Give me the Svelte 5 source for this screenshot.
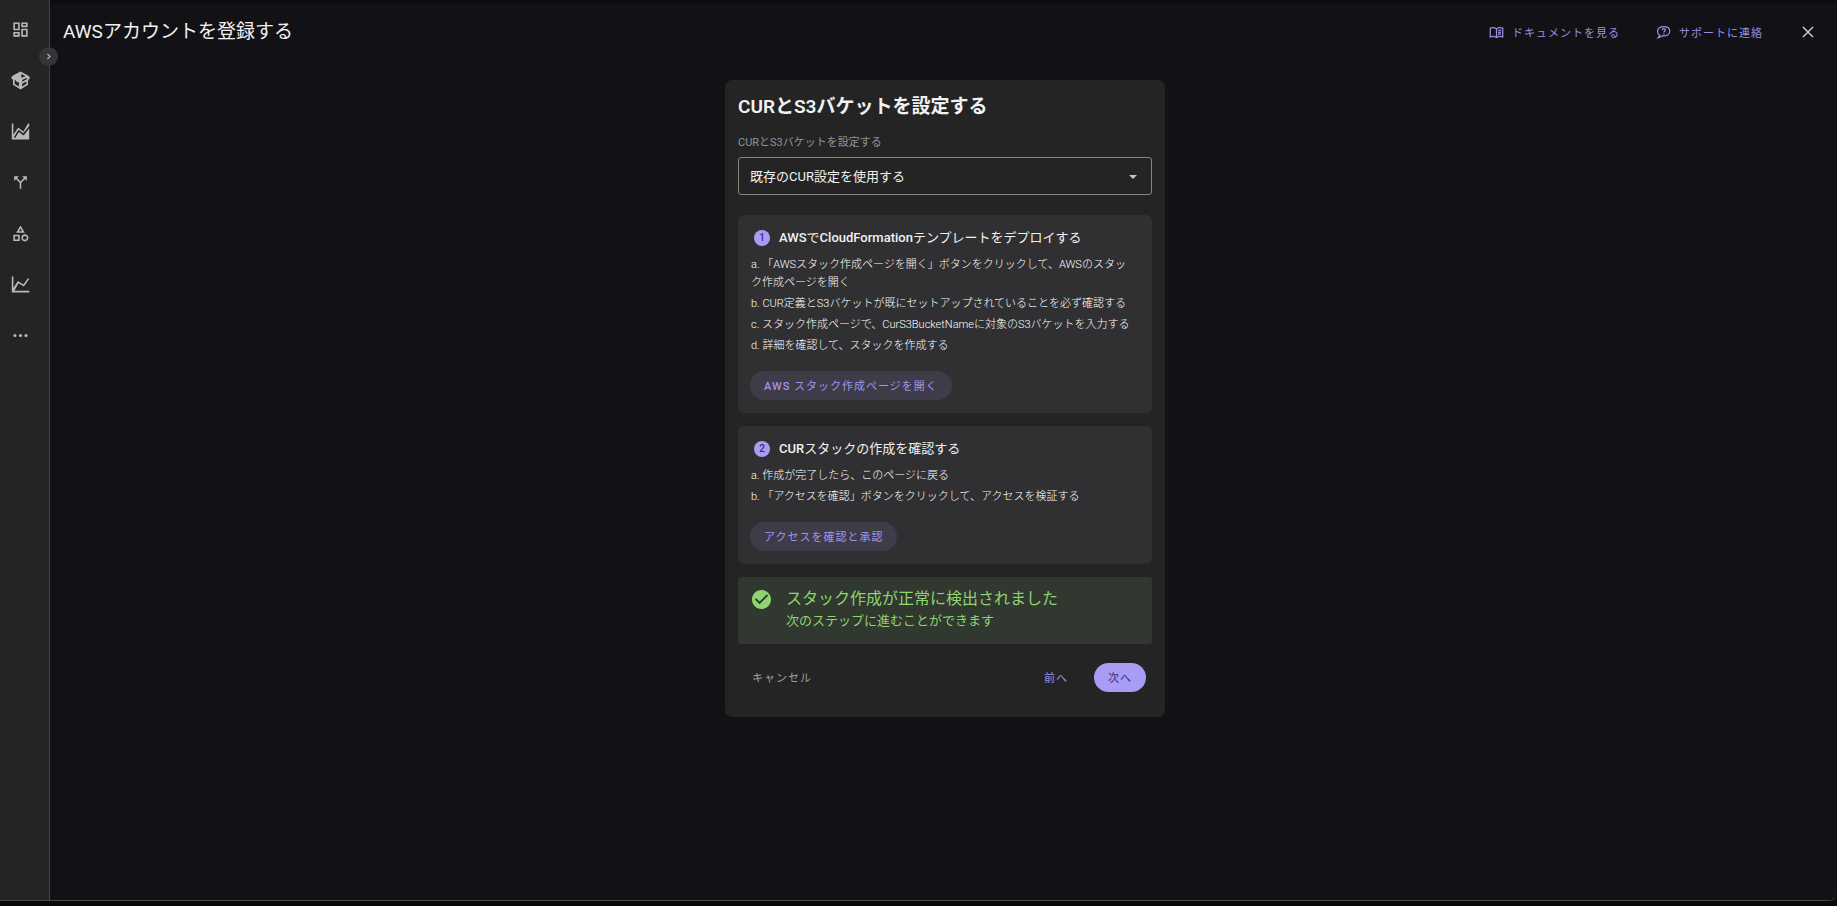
<script lang="ts">
	const navItems = [
		{
			label: 'ダッシュボード',
			path: 'M19 5v2h-4V5h4M9 5v6H5V5h4m10 8v6h-4v-6h4M9 17v2H5v-2h4M21 3h-8v6h8V3zM11 3H3v10h8V3zm10 8h-8v10h8V11zm-10 4H3v6h8v-6z'
		},
		{
			label: 'リソース',
			path: 'M12 .5 21 5.500l2.500 2.200v2.300L21.500 11v6.500L12 23.500 2.500 17.500V11L.5 9.500V7.500L3 5.500 12 .5zM4.700 10.800v5.500l5.300 3.300v-5.400L7.500 14l-2.800-3.200zM13 3.700v4.800l5.500-2L13 3.700zM14 11.500v2l6-3v-2l-6 3zm0 4.500v3.600l5.500-3.400v-3L14 16z'
		},
		{
			label: 'コスト',
			path: 'M1 2h2v14L9 7l6.500 5L21.500 2H23v20H1V2zM5.500 20 10 12.500l6 4.500L23 8V5l-7.500 9.300L9.500 9.800 3.500 19.500z'
		},
		{
			label: '配分',
			path: 'M14 4l2.290 2.290-4.290 4.300-4.290-4.300L10 4H4v6l2.290-2.290L11 12.410V20h2v-7.590l4.710-4.700L20 10V4z'
		},
		{
			label: 'カテゴリ',
			path: 'M12 2l-5.500 9h11L12 2zm0 3.840L13.930 9h-3.870L12 5.840zM17.500 13c-2.490 0-4.500 2.010-4.500 4.500s2.010 4.500 4.500 4.500 4.500-2.010 4.500-4.500-2.010-4.500-4.500-4.500zm0 7a2.500 2.500 0 0 1 0-5 2.500 2.500 0 0 1 0 5zM3 21.500h8v-8H3v8zm2-6h4v4H5v-4z'
		},
		{
			label: 'レポート',
			path: 'M1 2h2v14.500L8.700 7.500l7 4.500L21.200 4l1.700 1.100-6.600 9.500L9.500 10.300 4.300 20H23v2H1V2z'
		},
		{
			label: 'その他',
			path: 'M5 10a2 2 0 1 0 0 4 2 2 0 0 0 0-4zm7 0a2 2 0 1 0 0 4 2 2 0 0 0 0-4zm7 0a2 2 0 1 0 0 4 2 2 0 0 0 0-4z'
		}
	];

	const steps = [
		{
			title: 'AWSでCloudFormationテンプレートをデプロイする',
			items: [
				'a. 「AWSスタック作成ページを開く」ボタンをクリックして、AWSのスタック作成ページを開く',
				'b. CUR定義とS3バケットが既にセットアップされていることを必ず確認する',
				'c. スタック作成ページで、CurS3BucketNameに対象のS3バケットを入力する',
				'd. 詳細を確認して、スタックを作成する'
			],
			action: 'AWS スタック作成ページを開く'
		},
		{
			title: 'CURスタックの作成を確認する',
			items: [
				'a. 作成が完了したら、このページに戻る',
				'b. 「アクセスを確認」ボタンをクリックして、アクセスを検証する'
			],
			action: 'アクセスを確認と承認'
		}
	];

	let setup = $state('existing');

	// latin runs are medium, japanese stays regular
	function splitRuns(text: string) {
		return text.split(/([A-Za-z0-9]+)/).filter(Boolean);
	}
</script>

{#snippet mixed(text: string)}
	{#each splitRuns(text) as run}{#if /^[A-Za-z0-9]/.test(run)}<span class="latin">{run}</span
			>{:else}{run}{/if}{/each}
{/snippet}

<div class="app">
	<aside class="sidebar">
		<nav>
			{#each navItems as item}
				<a href="/" aria-label={item.label}>
					<svg viewBox="0 0 24 24"><path fill-rule="evenodd" d={item.path} /></svg>
				</a>
			{/each}
		</nav>
		<button class="toggle" aria-label="メニューを開く">
			<svg viewBox="0 0 24 24"><path d="M9 5l7 7-7 7" /></svg>
		</button>
	</aside>

	<div class="page">
		<header>
			<h1>AWSアカウントを登録する</h1>
			<div class="header-actions">
				<a href="/docs" class="header-link">
					<svg viewBox="0 0 24 24">
						<path
							d="M12 6C9.500 4.300 5.500 4 2 5v14c3.500-1 7.500-.7 10 1 2.500-1.700 6.500-2 10-1V5c-3.500-1-7.500-.7-10 1zv14"
						/>
						<path d="M14.500 9.200q2.500-1 5-.8M14.500 12.200q2.500-1 5-.8M14.500 15.200q2.500-1 5-.8" />
					</svg>
					ドキュメントを見る
				</a>
				<a href="/support" class="header-link">
					<svg viewBox="0 0 24 24">
						<path
							d="M6 16.500C3.500 15.500 2.500 13 2.500 10.500 2.500 5.500 6.500 2.500 12.500 2.500S22 5.500 22 10 18 17.500 12.500 17.500H10L3.500 20.500 6 16.500z"
						/>
						<path d="M10 8c0-3 5-3 5 0 0 2-2.500 2-2.500 4M12.500 13.500V15" />
					</svg>
					サポートに連絡
				</a>
				<button class="close" aria-label="閉じる">
					<svg viewBox="0 0 12 12"><path d="M1 1l10 10M11 1L1 11" /></svg>
				</button>
			</div>
		</header>

		<main>
			<section class="card">
				<h2>CURとS3バケットを設定する</h2>
				<label for="setup">CURとS3バケットを設定する</label>
				<div class="select">
					<select id="setup" bind:value={setup}>
						<option value="existing">既存のCUR設定を使用する</option>
					</select>
					<svg viewBox="0 0 8 4"><path d="M0 0h8L4 4z" /></svg>
				</div>

				{#each steps as step, i}
					<div class="step">
						<h3>
							<span class="number">{i + 1}</span>
							<span>{@render mixed(step.title)}</span>
						</h3>
						<ul>
							{#each step.items as item}
								<li>{item}</li>
							{/each}
						</ul>
						<button class="btn tonal">{@render mixed(step.action)}</button>
					</div>
				{/each}

				<div class="success" role="status">
					<svg viewBox="2 2 20 20">
						<path
							d="M12 2C6.480 2 2 6.480 2 12s4.480 10 10 10 10-4.480 10-10S17.520 2 12 2zm-2 15l-5-5 1.410-1.410L10 14.170l7.590-7.590L19 8l-9 9z"
						/>
					</svg>
					<div>
						<p class="success-title">スタック作成が正常に検出されました</p>
						<p class="success-text">次のステップに進むことができます</p>
					</div>
				</div>

				<div class="footer">
					<button class="btn cancel">キャンセル</button>
					<button class="btn">前へ</button>
					<button class="btn primary">次へ</button>
				</div>
			</section>
		</main>
	</div>
</div>

<style>
	:global(body) {
		background: #060a08;
	}
	.app {
		display: flex;
		box-sizing: border-box;
		height: calc(100vh - 5px);
		overflow: hidden;
		border-bottom: 1px solid #48484b;
		border-bottom-right-radius: 8px;
		background: #121116;
		color: #f1f1f1;
		font-family: Roboto, 'Noto Sans CJK JP', sans-serif;
	}
	svg {
		display: block;
		flex: none;
		fill: currentColor;
	}
	button {
		font: inherit;
		border: 0;
		background: none;
		cursor: pointer;
	}
	.sidebar {
		position: relative;
		flex: none;
		width: 49px;
		border-right: 1px solid #434346;
		background: #242425;
	}
	nav {
		display: flex;
		flex-direction: column;
		gap: 32px;
		padding: 20px 11px;
	}
	nav a {
		color: #b9b9ba;
	}
	nav svg {
		width: 19px;
		height: 19px;
	}
	.toggle {
		position: absolute;
		top: 47px;
		right: -9px;
		display: grid;
		place-items: center;
		width: 19px;
		height: 19px;
		padding: 0;
		border-radius: 50%;
		background: #353439;
		color: #b9b6c4;
	}
	.toggle svg {
		width: 9px;
		height: 9px;
		fill: none;
		stroke: currentColor;
		stroke-width: 3;
	}
	.page {
		flex: 1;
		min-width: 0;
		background: linear-gradient(#0a0a0d, #121116 6px);
	}
	header {
		display: flex;
		align-items: flex-start;
		justify-content: space-between;
		height: 46px;
		padding: 18px 23px 0 13px;
	}
	h1 {
		margin: 0;
		font-size: 19px;
		font-weight: 400;
		line-height: 28px;
	}
	.header-actions {
		display: flex;
		align-items: center;
		gap: 36px;
		height: 28px;
	}
	.header-link {
		display: flex;
		align-items: center;
		gap: 8px;
		color: #9a8fe0;
		font-size: 11px;
		letter-spacing: 1px;
		text-decoration: none;
	}
	.header-link svg {
		width: 15px;
		height: 15px;
		fill: none;
		stroke: currentColor;
		stroke-width: 2;
	}
	.close {
		margin-left: 3px;
		padding: 0;
		color: #c9c7d0;
	}
	.close svg {
		width: 12px;
		height: 12px;
		stroke: currentColor;
		stroke-width: 1.500;
	}
	main {
		display: flex;
		justify-content: center;
		padding: 16px 9px 16px 12px;
	}
	.card {
		box-sizing: border-box;
		width: 440px;
		padding: 14px 13px 25px;
		border-radius: 7px;
		background: #242425;
	}
	h2 {
		margin: 0;
		font-size: 19px;
		font-weight: 600;
		line-height: 26px;
	}
	label {
		display: block;
		margin: 14px 0 5px;
		color: #929293;
		font-size: 11px;
		line-height: 18px;
	}
	.select {
		position: relative;
		margin-bottom: 20px;
	}
	select {
		display: block;
		width: 100%;
		height: 38px;
		padding: 0 11px;
		appearance: none;
		border: 1px solid #858586;
		border-radius: 3px;
		background: transparent;
		color: #f1f1f1;
		font: inherit;
		font-size: 13px;
	}
	.select svg {
		position: absolute;
		top: 18px;
		right: 15px;
		width: 8px;
		height: 4px;
		color: #c4c4c5;
		pointer-events: none;
	}
	.step {
		margin-bottom: 13px;
		padding: 13px 13px 13px 12px;
		border-radius: 6px;
		background: #303032;
	}
	.latin {
		font-weight: 500;
	}
	h3 {
		display: flex;
		align-items: center;
		gap: 9px;
		margin: 0 0 8px;
		padding-left: 4px;
		font-size: 13px;
		font-weight: 400;
		line-height: 20px;
	}
	.number {
		width: 16px;
		border-radius: 50%;
		background: #a89df5;
		color: #352c70;
		font-size: 10px;
		font-weight: 500;
		line-height: 16px;
		text-align: center;
	}
	ul {
		display: grid;
		gap: 3px;
		margin: 0 0 16px;
		padding: 0 4px 0 1px;
		list-style: none;
		color: #fff;
		font-size: 11px;
		font-weight: 300;
		line-height: 18px;
	}
	.btn {
		height: 29px;
		padding: 0 14px 2px;
		border-radius: 15px;
		color: #9a8fe0;
		font-size: 11px;
		letter-spacing: 1px;
	}
	.tonal {
		display: block;
		background: #3f3c49;
		color: #a095ea;
	}
	.success {
		display: flex;
		gap: 15px;
		padding: 10px 14px 13px;
		border-radius: 3px;
		background: #30382f;
		color: #8fd46f;
	}
	.success svg {
		width: 19px;
		height: 19px;
		margin-top: 3px;
	}
	.success p {
		margin: 0;
	}
	.success-title {
		font-size: 16px;
		line-height: 24px;
	}
	.success-text {
		font-size: 13px;
		line-height: 20px;
	}
	.footer {
		display: flex;
		gap: 12px;
		margin-top: 19px;
		padding-right: 6px;
	}
	.cancel {
		margin-right: auto;
		color: #a19fab;
	}
	.primary {
		background: #a89df5;
		color: #352c70;
	}
</style>
